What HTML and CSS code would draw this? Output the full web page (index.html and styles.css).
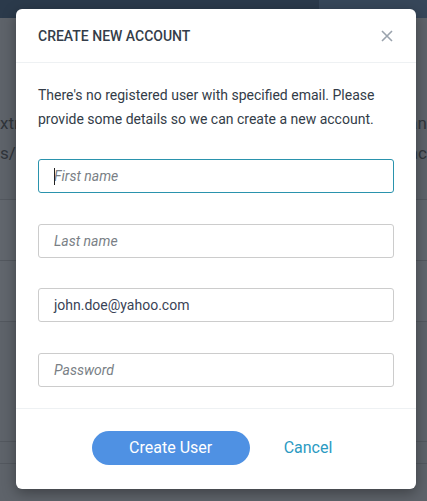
FILE: index.html
```html
<!DOCTYPE html>
<html>
<head>
<meta charset="utf-8">
<link rel="stylesheet" href="styles.css">
</head>
<body>
<div class="page">
  <div class="topbar"><div class="topbar-left"></div><div class="topbar-right"></div></div>
  <div class="content">
    <div class="bg-text first"><span>xtra</span><span>an</span></div>
    <div class="bg-text"><span>s/</span><span>ac</span></div>
    <div class="bg-row r1"></div>
    <div class="bg-row r2 light"></div>
    <div class="bg-row r3 light"></div>
    <div class="bg-row r4"></div>
    <div class="bg-row r5"></div>
  </div>
</div>

<div class="overlay">
  <div class="modal">
    <div class="modal-header">
      <h2 class="modal-title">CREATE NEW ACCOUNT</h2>
      <button class="close" aria-label="Close">
        <svg width="12" height="12" viewBox="0 0 12 12"><path d="M1 1L11 11M11 1L1 11" stroke="#9aa3ad" stroke-width="1.6" fill="none"/></svg>
      </button>
    </div>
    <div class="modal-body">
      <p class="intro">There's no registered user with specified email. Please provide some details so we can create a new account.</p>
      <form class="fields">
        <div class="field focus"><span class="caret"></span><span class="ph">First name</span></div>
        <div class="field"><span class="ph">Last name</span></div>
        <div class="field"><span class="val">john.doe@yahoo.com</span></div>
        <div class="field"><span class="ph">Password</span></div>
      </form>
    </div>
    <div class="modal-footer">
      <button class="btn-primary">Create User</button>
      <a class="btn-link">Cancel</a>
    </div>
  </div>
</div>
</body>
</html>
```
FILE: styles.css
```css
* { box-sizing: border-box; }
html, body { margin: 0; padding: 0; }
body {
  width: 427px;
  height: 501px;
  overflow: hidden;
  font-family: Roboto, "Liberation Sans", sans-serif;
  background: #5e636a;
  position: relative;
}
.page { width: 427px; height: 501px; }
.topbar { height: 18px; display: flex; }
.topbar-left { width: 319px; background: #2b3a4b; }
.topbar-right { flex: 1; background: #37475a; }
.content { display: flex; flex-direction: column; }
.bg-text {
  display: flex;
  justify-content: space-between;
  font-size: 17px;
  color: #30353b;
  height: 30px;
  line-height: 30px;
}
.bg-text.first { margin-top: 90px; }
.bg-row { border-bottom: 1px solid #53585f; }
.light { background: #61666d; }
.r1 { height: 32px; }
.r2 { height: 61px; }
.r3 { height: 61px; }
.r4 { height: 120px; }
.r5 { height: 22px; }

.overlay {
  position: absolute;
  inset: 0;
  display: flex;
  justify-content: flex-start;
  padding-top: 9px;
  padding-left: 16px;
}
.modal {
  width: 400px;
  height: 480px;
  background: #fff;
  border-radius: 6px;
  box-shadow: 0 4px 14px rgba(0,0,0,0.35);
  display: flex;
  flex-direction: column;
}
.modal-header {
  height: 54px;
  border-bottom: 1px solid #eef1f3;
  display: flex;
  align-items: center;
  justify-content: space-between;
  padding: 0 23px 0 22px;
}
.modal-title {
  margin: 0;
  font-size: 14px;
  font-weight: 500;
  color: #343d49;
}
.close {
  border: 0;
  background: none;
  padding: 0;
  width: 12px;
  height: 12px;
  display: flex;
}
.modal-body {
  padding: 21px 22px 21px 22px;
  border-bottom: 1px solid #eef1f3;
}
.intro {
  margin: 0;
  font-size: 14px;
  line-height: 23.5px;
  color: #333c48;
}
.fields {
  margin-top: 28px;
  display: flex;
  flex-direction: column;
  gap: 30.5px;
}
.field {
  height: 34px;
  border: 1px solid #cccccc;
  border-radius: 3px;
  display: flex;
  align-items: center;
  padding-left: 15px;
  font-size: 14px;
  position: relative;
}
.field.focus { border-color: #2a93ad; }
.caret {
  position: absolute;
  left: 15px;
  top: 8px;
  width: 1px;
  height: 17px;
  background: #222;
}
.ph { font-style: italic; color: #7a7f86; }
.val { color: #3a4356; }
.modal-footer {
  flex: 1;
  display: flex;
  justify-content: center;
  align-items: flex-start;
  padding-top: 22px;
  gap: 34px;
  padding-right: 8px;
}
.btn-primary {
  width: 158px;
  height: 34px;
  border: 0;
  border-radius: 17px;
  background: #4f91e3;
  color: #fff;
  font-family: inherit;
  font-size: 16px;
}
.btn-link {
  font-size: 16px;
  color: #2b9ac2;
  line-height: 34px;
}
```
